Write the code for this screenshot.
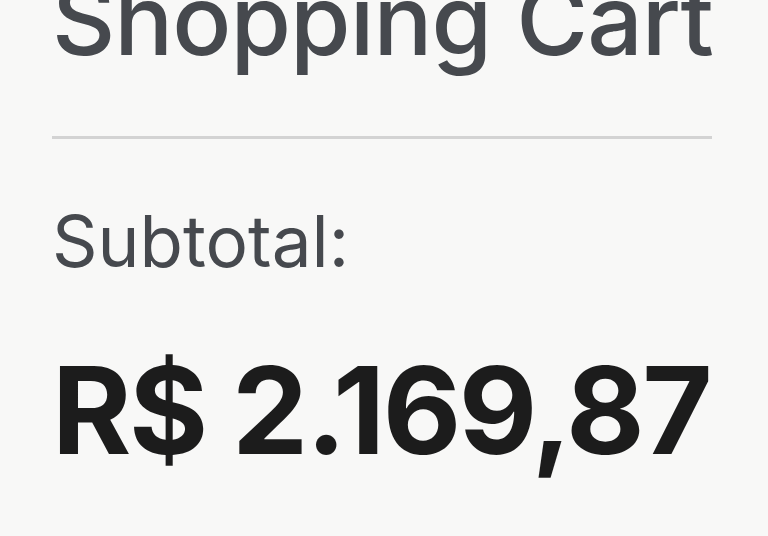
export default function App() {
  return (
    <div className="min-h-[536px] w-full overflow-hidden bg-[#f8f8f7] font-['Inter',sans-serif]">
      <div className="px-[52px]">
        <h1 className="-mt-[29px] whitespace-nowrap text-[98px] font-medium leading-none tracking-[-0.01em] text-[#46494e]">
          Shopping Cart
        </h1>
        <div className="mt-[67px] h-[3px] w-[660px] bg-[#d3d3d3]" />
        <div className="mt-[67px] whitespace-nowrap text-[71px] leading-none text-[#46494e]">Subtotal:</div>
        <div className="mt-[73px] whitespace-nowrap text-[121px] font-bold leading-none tracking-[-0.02em] text-[#1c1c1c]">
          R$ 2.169,87
        </div>
      </div>
    </div>
  );
}
